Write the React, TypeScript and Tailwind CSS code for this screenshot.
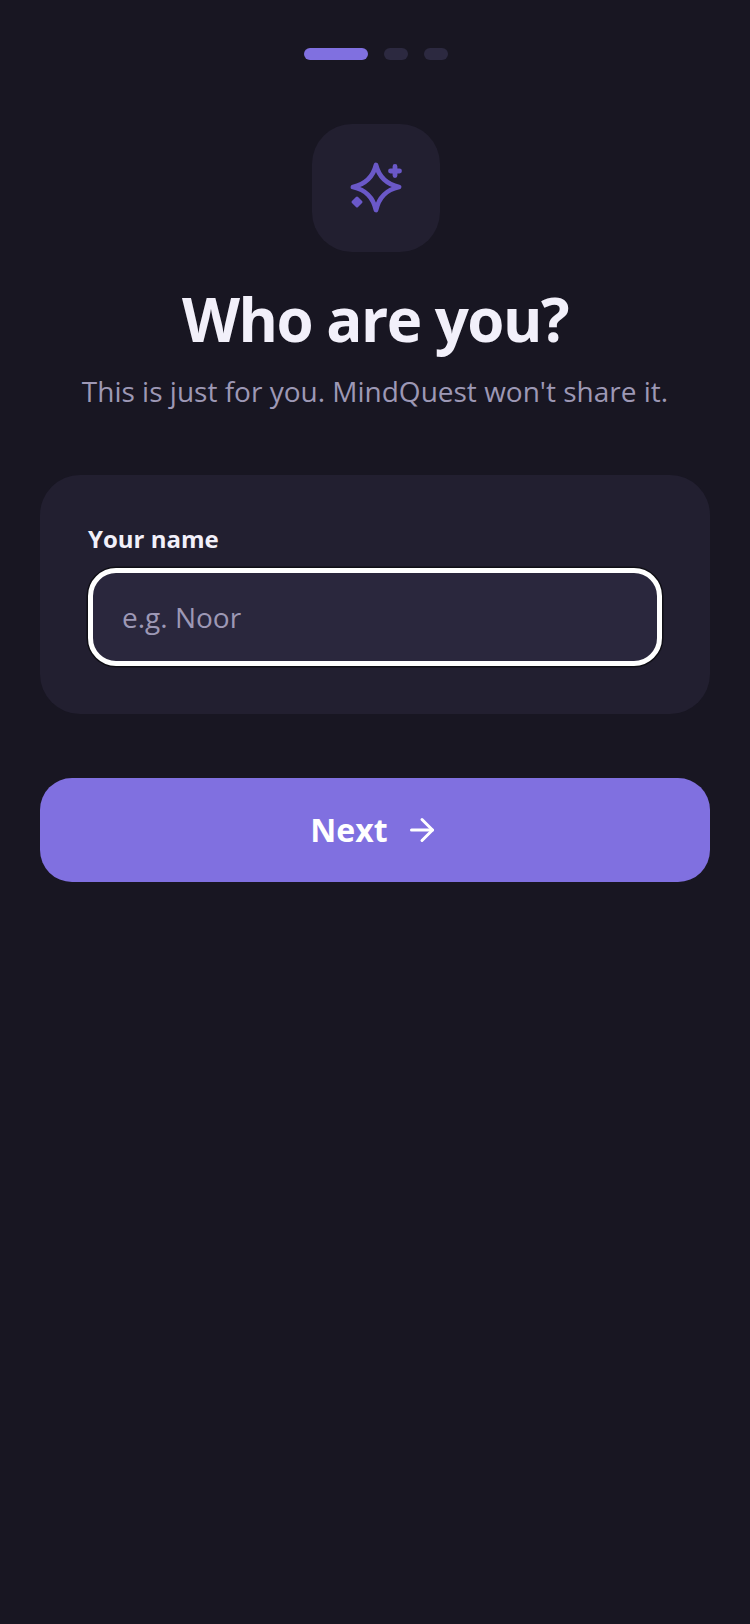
import React from 'react';
import { ArrowRight } from 'lucide-react';

const SparkleIcon = () => (
  <svg viewBox="0 0 56 56" className="h-14 w-14 text-[#6a58c8]" fill="none" stroke="currentColor" strokeWidth="4.8" strokeLinecap="round" strokeLinejoin="round">
    <path d="M28 5C31 17 38 24 51 27C38 30 31 37 28 50C25 37 18 30 5 27C18 24 25 17 28 5Z" />
    <path d="M47 6.5V15.5M42.5 11H51.5" />
    <path d="M9 38L13 42L9 46L5 42Z" fill="currentColor" strokeWidth="3" />
  </svg>
);

export default function App() {
  return (
    <div className="min-h-[1624px] bg-[#181622] px-10 pt-12 font-['Open_Sans',sans-serif]">
      {/* Progress */}
      <div className="ml-[2px] flex justify-center gap-4">
        <div className="h-3 w-16 rounded-md bg-[#8070e0]" />
        <div className="h-3 w-6 rounded-md bg-[#2c2940]" />
        <div className="h-3 w-6 rounded-md bg-[#2c2940]" />
      </div>

      {/* Header */}
      <div className="mt-16 flex flex-col items-center">
        <div className="ml-[2px] flex h-32 w-32 items-center justify-center rounded-[40px] bg-[#221f30]">
          <SparkleIcon />
        </div>
        <h1 className="mt-[29px] text-[60px] leading-[76px] font-bold tracking-[-1.5px] text-[#f2f0fa]">Who are you?</h1>
        <p className="mt-3 text-[28px] leading-[44px] text-[#9d98b5]">This is just for you. MindQuest won't share it.</p>
      </div>

      {/* Card */}
      <div className="mt-[62px] rounded-[40px] bg-[#221f30] px-12 pt-[46px] pb-12">
        <label className="block text-[24px] leading-9 font-bold text-[#f2f0fa]">Your name</label>
        <input
          placeholder="e.g. Noor"
          className="mt-[11px] block h-[98px] w-full rounded-[28px] border-[5px] border-white bg-[#2a273d] px-[29px] text-[28px] text-[#f2f0fa] shadow-[0_0_0_1.5px_#0f0e15] outline-none placeholder:text-[#9d98b5]"
        />
      </div>

      {/* Next */}
      <button className="mt-16 flex h-[104px] w-full items-center justify-center gap-4 rounded-[32px] bg-[#8070e0] text-[32px] font-bold text-white">
        Next
        <ArrowRight className="h-9 w-9" />
      </button>
    </div>
  );
}
